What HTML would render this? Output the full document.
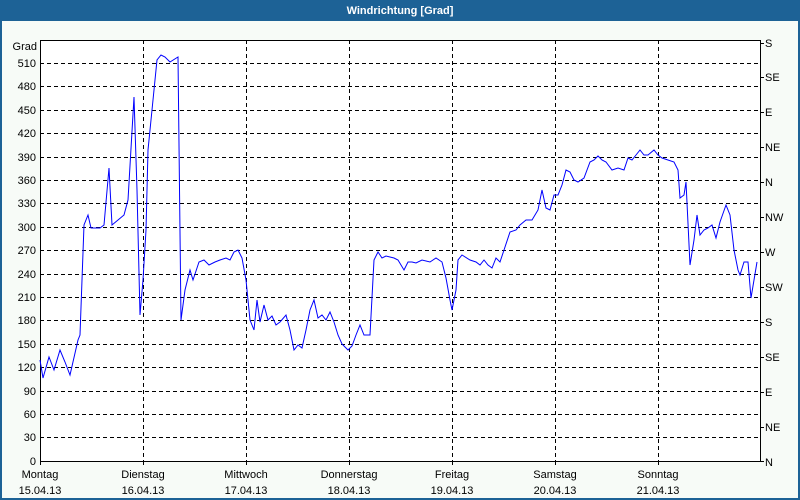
<!DOCTYPE html>
<html><head><meta charset="utf-8"><style>
html,body{margin:0;padding:0;background:#1d6296;}
svg{display:block;font-family:"Liberation Sans","DejaVu Sans",sans-serif;}
</style></head><body>
<svg width="800" height="500" xmlns="http://www.w3.org/2000/svg">
<rect x="0" y="0" width="800" height="500" fill="#1d6296"/>
<rect x="2" y="21" width="796" height="477" fill="#f7fbf7"/>
<text x="400" y="14" fill="#fff" font-size="11" font-weight="bold" text-anchor="middle">Windrichtung [Grad]</text>
<rect x="40" y="40" width="720" height="421" fill="#fff"/>
<g stroke="#000" stroke-width="1" stroke-dasharray="4,3" fill="none" shape-rendering="crispEdges">
<path d="M40 63.5H760M40 86.5H760M40 110.5H760M40 133.5H760M40 157.5H760M40 180.5H760M40 203.5H760M40 227.5H760M40 250.5H760M40 274.5H760M40 297.5H760M40 320.5H760M40 344.5H760M40 367.5H760M40 391.5H760M40 414.5H760M40 437.5H760"/>
<path d="M143.5 40V461M246.5 40V461M349.5 40V461M452.5 40V461M555.5 40V461M658.5 40V461"/>
</g>
<g stroke="#000" stroke-width="1" fill="none" shape-rendering="crispEdges">
<path d="M40.5 461V40.5H760.5V461"/>
<path d="M40 461.5H760"/>
<path d="M760 43.5h4M760 77.5h4M760 112.5h4M760 147.5h4M760 182.5h4M760 217.5h4M760 252.5h4M760 287.5h4M760 322.5h4M760 357.5h4M760 392.5h4M760 427.5h4M760 461.5h4"/>
<path d="M40.5 461v4M143.5 461v4M246.5 461v4M349.5 461v4M452.5 461v4M555.5 461v4M658.5 461v4"/>
</g>
<g font-size="11" fill="#000" text-anchor="end">
<text x="37" y="50">Grad</text>
<text x="36" y="67">510</text><text x="36" y="90">480</text><text x="36" y="114">450</text><text x="36" y="137">420</text><text x="36" y="161">390</text><text x="36" y="184">360</text><text x="36" y="207">330</text><text x="36" y="231">300</text><text x="36" y="254">270</text><text x="36" y="278">240</text><text x="36" y="301">210</text><text x="36" y="324">180</text><text x="36" y="348">150</text><text x="36" y="371">120</text><text x="36" y="395">90</text><text x="36" y="418">60</text><text x="36" y="441">30</text><text x="36" y="465">0</text>
</g>
<g font-size="11" fill="#000">
<text x="765" y="47">S</text><text x="765" y="81">SE</text><text x="765" y="116">E</text><text x="765" y="151">NE</text><text x="765" y="186">N</text><text x="765" y="221">NW</text><text x="765" y="256">W</text><text x="765" y="291">SW</text><text x="765" y="326">S</text><text x="765" y="361">SE</text><text x="765" y="396">E</text><text x="765" y="431">NE</text><text x="765" y="466">N</text>
</g>
<g font-size="11" fill="#000" text-anchor="middle">
<text x="40" y="478">Montag</text><text x="40" y="494">15.04.13</text>
<text x="143" y="478">Dienstag</text><text x="143" y="494">16.04.13</text>
<text x="246" y="478">Mittwoch</text><text x="246" y="494">17.04.13</text>
<text x="349" y="478">Donnerstag</text><text x="349" y="494">18.04.13</text>
<text x="452" y="478">Freitag</text><text x="452" y="494">19.04.13</text>
<text x="555" y="478">Samstag</text><text x="555" y="494">20.04.13</text>
<text x="658" y="478">Sonntag</text><text x="658" y="494">21.04.13</text>
</g>
<polyline fill="none" stroke="#0000ff" stroke-width="1" points="40,360 43,378 49,357 54,370 60,350 65,362 70,375 78,340 80,335 84,225 88,215 91,228 100,228 104,225 109,168 112,225 118,220 124,215 128,200 134,97 137,190 140,315 143,280 146,230 148,150 152,110 157,60 161,55 165,57 170,62 178,57 181,320 185,290 190,270 193,280 199,262 204,260 209,265 215,262 220,260 226,258 230,260 234,252 238,250 242,258 246,280 250,320 254,330 257,300 260,322 264,305 268,320 272,316 276,325 280,322 286,315 290,330 294,350 298,345 302,348 306,330 310,310 314,300 318,318 322,315 326,320 330,312 334,322 338,335 342,344 348,350 352,346 356,335 360,325 364,335 370,335 374,260 378,252 382,258 386,256 394,258 398,260 404,270 408,262 412,262 416,263 422,260 430,262 436,258 442,262 446,278 450,300 452,310 456,290 458,260 462,255 470,260 476,262 480,265 484,260 488,265 492,268 496,258 500,262 504,250 510,232 516,230 520,225 526,220 532,220 538,210 542,190 546,208 550,210 554,195 558,195 562,185 566,170 570,172 574,180 578,182 584,178 590,162 594,160 598,156 602,160 606,162 612,170 618,168 624,170 628,158 632,160 636,155 640,150 644,155 648,155 654,150 658,155 662,158 668,160 674,162 678,170 680,198 684,195 686,182 690,265 694,240 697,215 700,235 704,230 708,228 712,225 716,238 720,222 726,205 730,215 734,250 738,270 740,275 744,262 748,262 751,298 754,280 757,262"/>
</svg>
</body></html>
